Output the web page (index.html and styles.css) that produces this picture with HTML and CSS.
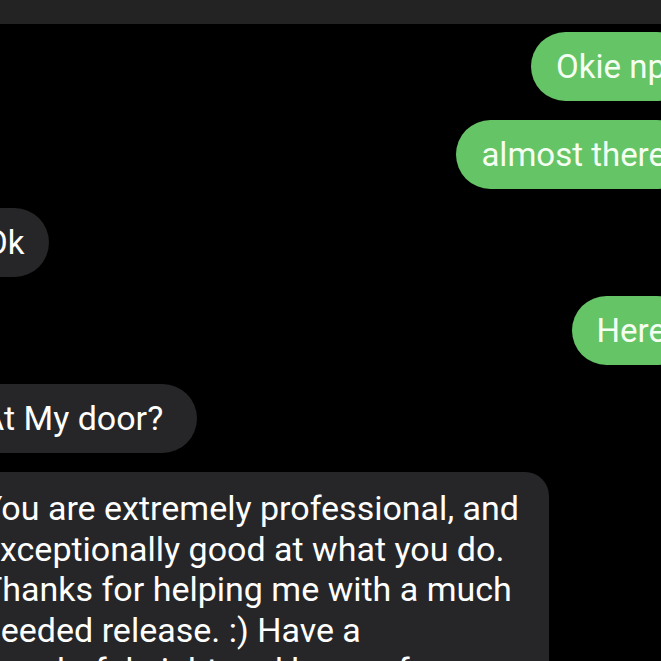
FILE: index.html
```html
<!DOCTYPE html>
<html lang="en">
<head>
<meta charset="utf-8">
<title>Messages</title>
<link rel="stylesheet" href="styles.css">
</head>
<body>
  <div class="topbar"></div>
  <div class="thread">
    <div class="row out"><div class="bubble sent">Okie np</div></div>
    <div class="row out"><div class="bubble sent">almost there</div></div>
    <div class="row in"><div class="bubble recv">Ok</div></div>
    <div class="row out"><div class="bubble sent">Here</div></div>
    <div class="row in"><div class="bubble recv door">At My door?</div></div>
    <div class="row in"><div class="bubble recv long">You are extremely professional, and<br>exceptionally good at what you do.<br>Thanks for helping me with a much<br>needed release. :) Have a<br>wonderful night and have a fun</div></div>
  </div>
</body>
</html>
```

FILE: styles.css
```css
html, body {
  margin: 0;
  padding: 0;
  background: #000;
  height: 100%;
  overflow: hidden;
}

body {
  font-family: Roboto, "Noto Sans", sans-serif;
  color: #fff;
}

.topbar {
  height: 24px;
  background: #232323;
}

.thread {
  display: flex;
  flex-direction: column;
  gap: 19px;
  padding-top: 8px;
  margin-left: -40px;
  margin-right: -30px;
}

.row {
  display: flex;
}

.row.out {
  justify-content: flex-end;
}

.row.in {
  justify-content: flex-start;
}

.bubble {
  font-size: 33px;
  line-height: 41px;
  padding: 14px 25px;
  border-radius: 35px;
  white-space: nowrap;
}

.sent {
  background: #65c466;
  color: #f4fff2;
}

.recv {
  background: #262628;
  color: #fff;
}

.door {
  font-size: 34px;
  padding-right: 34px;
  margin-left: -3px;
}

.long {
  font-size: 34px;
  line-height: 40.5px;
  border-radius: 24px;
  padding-top: 16px;
  padding-right: 30px;
  margin-left: -3px;
}
```
